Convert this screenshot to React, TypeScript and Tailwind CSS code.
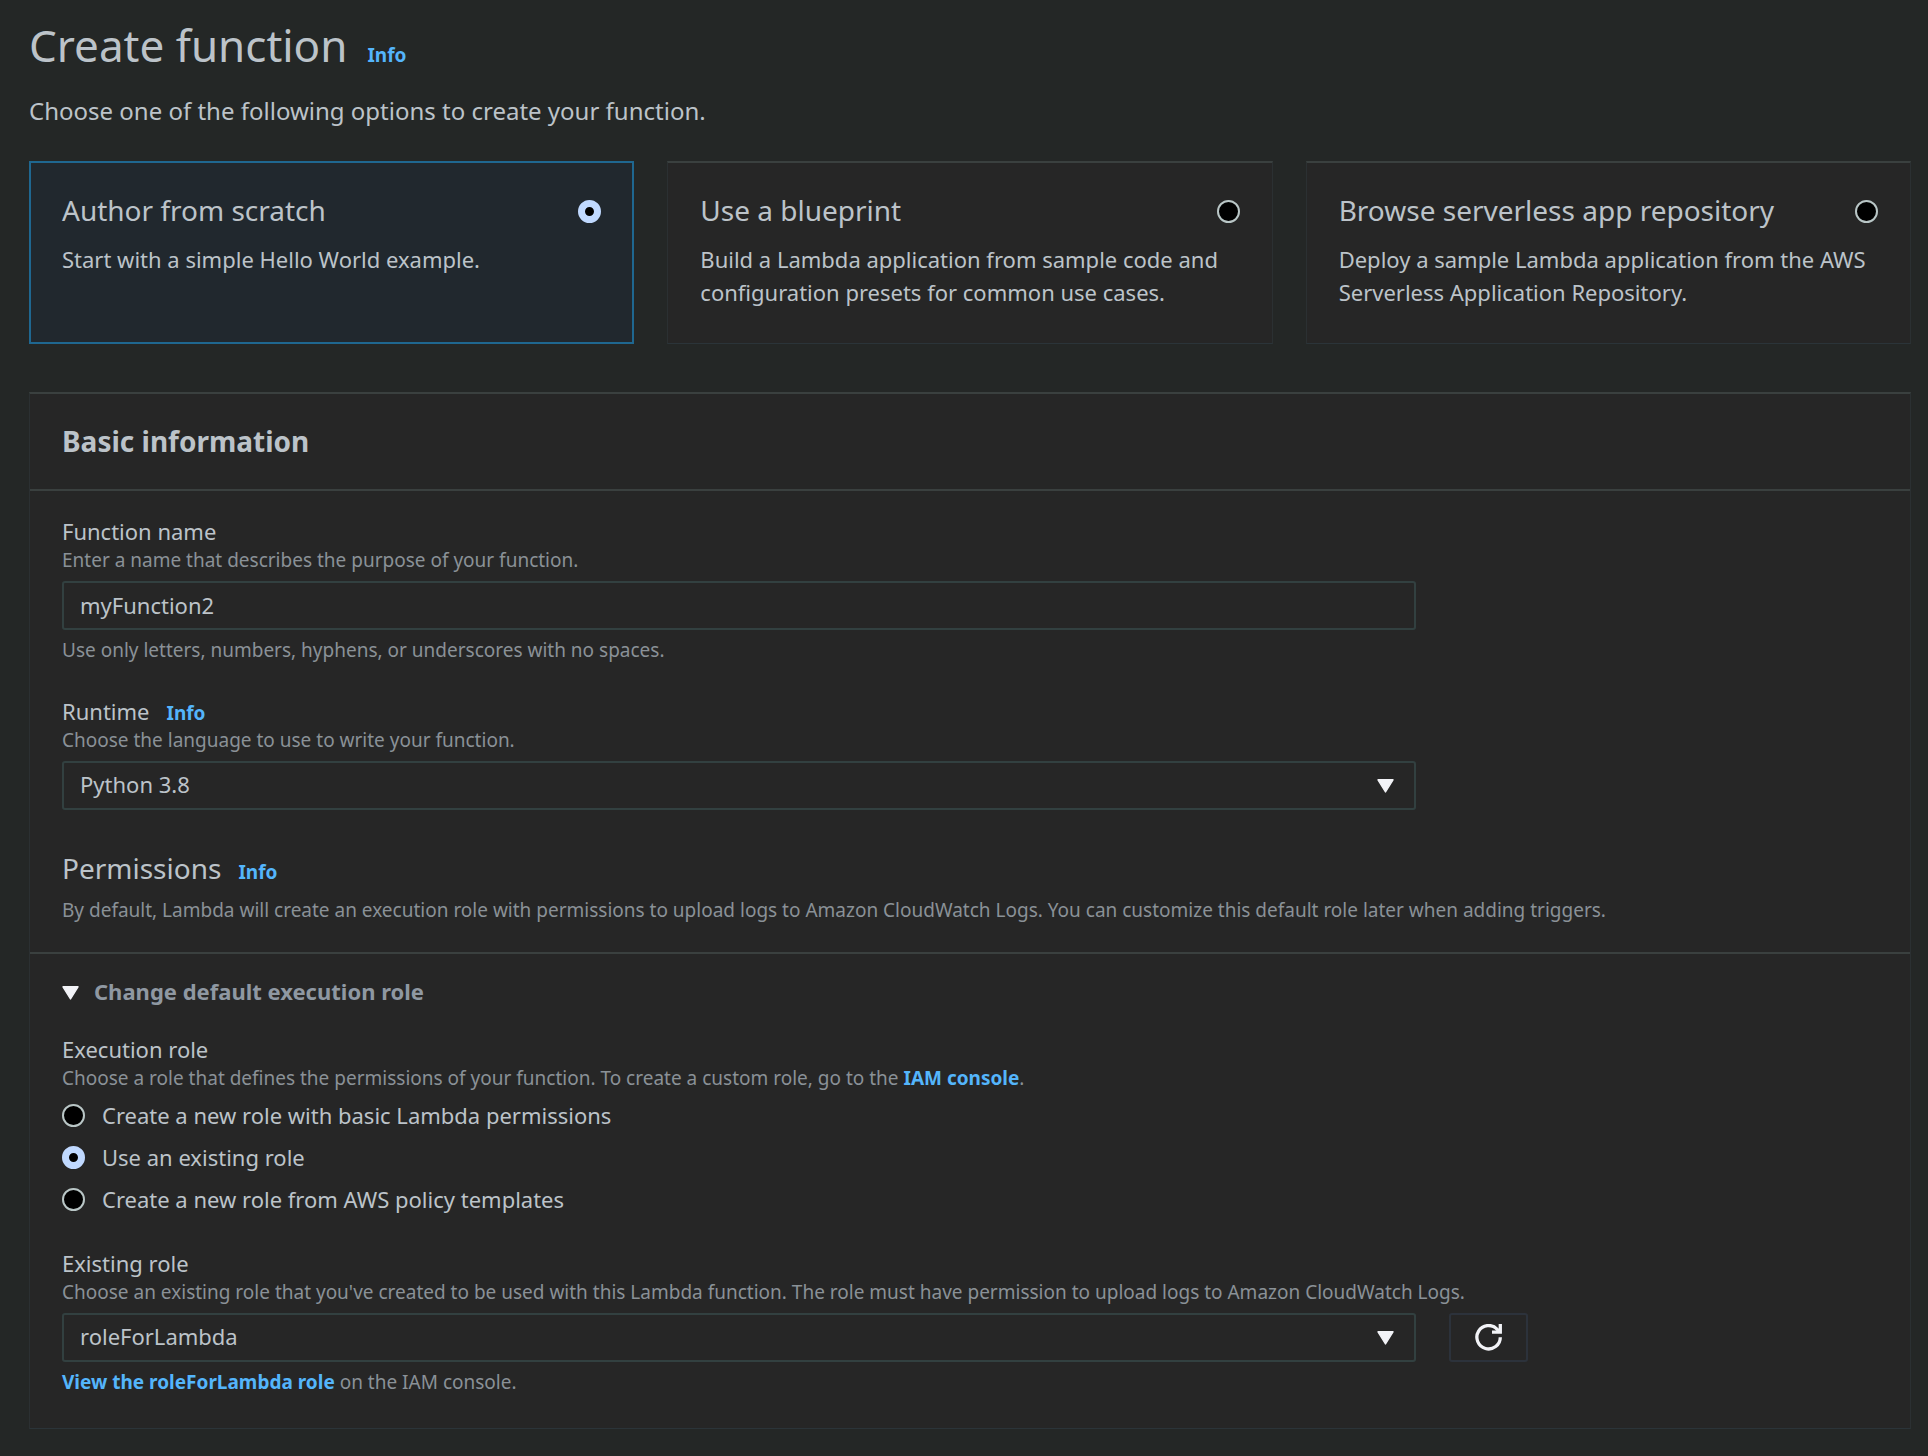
import { useState, type ReactNode } from "react";

const creationOptions = [
  {
    id: "scratch",
    title: "Author from scratch",
    description: "Start with a simple Hello World example.",
  },
  {
    id: "blueprint",
    title: "Use a blueprint",
    description:
      "Build a Lambda application from sample code and configuration presets for common use cases.",
  },
  {
    id: "repository",
    title: "Browse serverless app repository",
    description:
      "Deploy a sample Lambda application from the AWS Serverless Application Repository.",
  },
];

const roleOptions = [
  { id: "basic", label: "Create a new role with basic Lambda permissions" },
  { id: "existing", label: "Use an existing role" },
  { id: "templates", label: "Create a new role from AWS policy templates" },
];

const radioClass =
  "size-[23px] shrink-0 appearance-none rounded-full border-2 border-[#b9c6c6] bg-black checked:border-[7px] checked:border-[#c0d9ff]";

const controlClass =
  "h-[49px] w-full appearance-none rounded-[3px] border-2 border-[#324040] bg-[#262626] px-4 text-[22px] leading-7 text-[#bcc3c9] outline-none focus:border-[#1f6790]";

function InfoLink() {
  return (
    <a href="#info" className="text-[19px] leading-7 font-bold text-[#54b5fb] hover:underline">
      Info
    </a>
  );
}

function Triangle() {
  return (
    <svg viewBox="0 0 17 14" className="h-3.5 w-[17px] shrink-0" aria-hidden="true">
      <path d="M1 .8H16L8.5 13Z" fill="#f2f3f7" stroke="#f2f3f7" strokeWidth="1.4" strokeLinejoin="round" />
    </svg>
  );
}

function RefreshIcon() {
  return (
    <svg viewBox="0 0 27 27" className="size-[27px]" fill="none" stroke="#f2f3f7" strokeWidth="3.3" aria-hidden="true">
      <path d="M25.3 13.2A11.7 11.7 0 1 1 22.2 5.3L24.8 8" />
      <path d="M17 8.1H25.3V0" />
    </svg>
  );
}

function Hint({ id, children }: { id?: string; children: ReactNode }) {
  return (
    <p id={id} className="text-[19px] leading-7 text-[#8a9197]">
      {children}
    </p>
  );
}

function SelectBox({
  id,
  describedBy,
  options,
}: {
  id: string;
  describedBy: string;
  options: string[];
}) {
  return (
    <div className="relative">
      <select
        id={id}
        aria-describedby={describedBy}
        defaultValue={options[0]}
        className={`${controlClass} pb-1`}
      >
        {options.map((option) => (
          <option key={option}>{option}</option>
        ))}
      </select>
      <span className="pointer-events-none absolute inset-y-0 right-[22px] flex items-center">
        <Triangle />
      </span>
    </div>
  );
}

export default function App() {
  const [option, setOption] = useState("scratch");
  const [role, setRole] = useState("existing");
  const [open, setOpen] = useState(true);

  return (
    <main className="min-h-screen bg-[#242726] pt-[17px] pr-[17px] pb-7 pl-[29px] font-['Noto_Sans',sans-serif] text-[#bcc3c9]">
      <header>
        <div className="flex items-baseline gap-5">
          <h1 className="text-[44px] leading-[56px]">Create function</h1>
          <InfoLink />
        </div>
        <p className="mt-[22px] text-2xl leading-8">
          Choose one of the following options to create your function.
        </p>
      </header>

      <div role="radiogroup" aria-label="Creation method" className="mt-[34px] grid grid-cols-3 gap-[33px]">
        {creationOptions.map(({ id, title, description }) => (
          <label
            key={id}
            className="block cursor-pointer border border-t-2 border-[#2b3032] border-t-[#3a403f] border-b-[#2b3439] bg-[#262626] px-8 pt-[29px] pb-[34px] has-checked:border-2 has-checked:border-[#1f6790] has-checked:bg-[#21282e] has-checked:px-[31px] has-checked:pb-[33px]"
          >
            <span className="flex items-start justify-between gap-4">
              <span className="text-[28px] leading-9">{title}</span>
              <input
                type="radio"
                name="creation"
                checked={option === id}
                onChange={() => setOption(id)}
                className={`${radioClass} mt-2`}
              />
            </span>
            <span className="mt-[15px] block text-[22px] leading-[33px]">{description}</span>
          </label>
        ))}
      </div>

      <section className="mt-12 border border-t-2 border-[#2b3032] border-t-[#3a403f] border-b-[#2b3439] bg-[#262626]">
        <div className="border-b-2 border-[#3a403f] px-8 pt-[29px] pb-[30px]">
          <h2 className="text-[28px] leading-9 font-bold">Basic information</h2>
        </div>

        <div className="px-8 pt-[25px] pb-7">
          <div className="grid grid-cols-4 gap-x-[33px] gap-y-8">
            <div className="col-span-3">
              <label htmlFor="function-name" className="block text-[22px] leading-[30px]">
                Function name
              </label>
              <Hint>Enter a name that describes the purpose of your function.</Hint>
              <div className="mt-[7px] mb-1.5">
                <input
                  id="function-name"
                  type="text"
                  defaultValue="myFunction2"
                  aria-describedby="function-name-rule"
                  className={`${controlClass} pb-0.5`}
                />
              </div>
              <Hint id="function-name-rule">
                Use only letters, numbers, hyphens, or underscores with no spaces.
              </Hint>
            </div>

            <div className="col-span-3">
              <div className="flex h-[30px] items-baseline gap-[17px]">
                <label htmlFor="runtime" className="text-[22px] leading-[30px]">
                  Runtime
                </label>
                <InfoLink />
              </div>
              <Hint id="runtime-hint">Choose the language to use to write your function.</Hint>
              <div className="mt-[7px]">
                <SelectBox
                  id="runtime"
                  describedBy="runtime-hint"
                  options={["Python 3.8", "Python 3.7", "Node.js 12.x", "Java 11"]}
                />
              </div>
            </div>
          </div>

          <div className="mt-10 mb-2.5 flex items-baseline gap-[17px]">
            <h3 className="text-[28px] leading-9">Permissions</h3>
            <InfoLink />
          </div>
          <Hint>
            By default, Lambda will create an execution role with permissions to upload logs to Amazon
            CloudWatch Logs. You can customize this default role later when adding triggers.
          </Hint>
        </div>

        <div className="border-t-2 border-[#3a403f] px-8 pt-[22px] pb-8">
          <button
            type="button"
            aria-expanded={open}
            onClick={() => setOpen(!open)}
            className="flex items-center gap-[15px] text-[22px] leading-[30px] font-bold text-[#8f98a2]"
          >
            <span className="pt-1">
              <Triangle />
            </span>
            Change default execution role
          </button>

          {open && (
            <>
              <fieldset className="mt-7" aria-describedby="role-hint">
                <legend className="text-[22px] leading-[30px]">Execution role</legend>
                <Hint id="role-hint">
                  Choose a role that defines the permissions of your function. To create a custom role, go
                  to the{" "}
                  <a href="#iam" className="font-bold text-[#54b5fb] hover:underline">
                    IAM console
                  </a>
                  .
                </Hint>
                <div className="mt-1.5 flex flex-col items-start gap-2">
                  {roleOptions.map(({ id, label }) => (
                    <label key={id} className="flex items-center gap-[17px] text-[22px] leading-[34px]">
                      <input
                        type="radio"
                        name="role"
                        checked={role === id}
                        onChange={() => setRole(id)}
                        className={radioClass}
                      />
                      {label}
                    </label>
                  ))}
                </div>
              </fieldset>

              <div className="mt-8">
                <label htmlFor="existing-role" className="block text-[22px] leading-[30px]">
                  Existing role
                </label>
                <Hint id="existing-role-hint">
                  Choose an existing role that you've created to be used with this Lambda function. The
                  role must have permission to upload logs to Amazon CloudWatch Logs.
                </Hint>
                <div className="mt-[7px] mb-1.5 grid grid-cols-4 gap-[33px]">
                  <div className="col-span-3">
                    <SelectBox
                      id="existing-role"
                      describedBy="existing-role-hint"
                      options={["roleForLambda", "lambda-basic-execution"]}
                    />
                  </div>
                  <button
                    type="button"
                    aria-label="Refresh roles"
                    className="flex w-[79px] items-center justify-center rounded-[3px] border-2 border-[#2c323b]"
                  >
                    <RefreshIcon />
                  </button>
                </div>
                <Hint>
                  <a href="#role" className="font-bold text-[#54b5fb] hover:underline">
                    View the roleForLambda role
                  </a>{" "}
                  on the IAM console.
                </Hint>
              </div>
            </>
          )}
        </div>
      </section>
    </main>
  );
}
